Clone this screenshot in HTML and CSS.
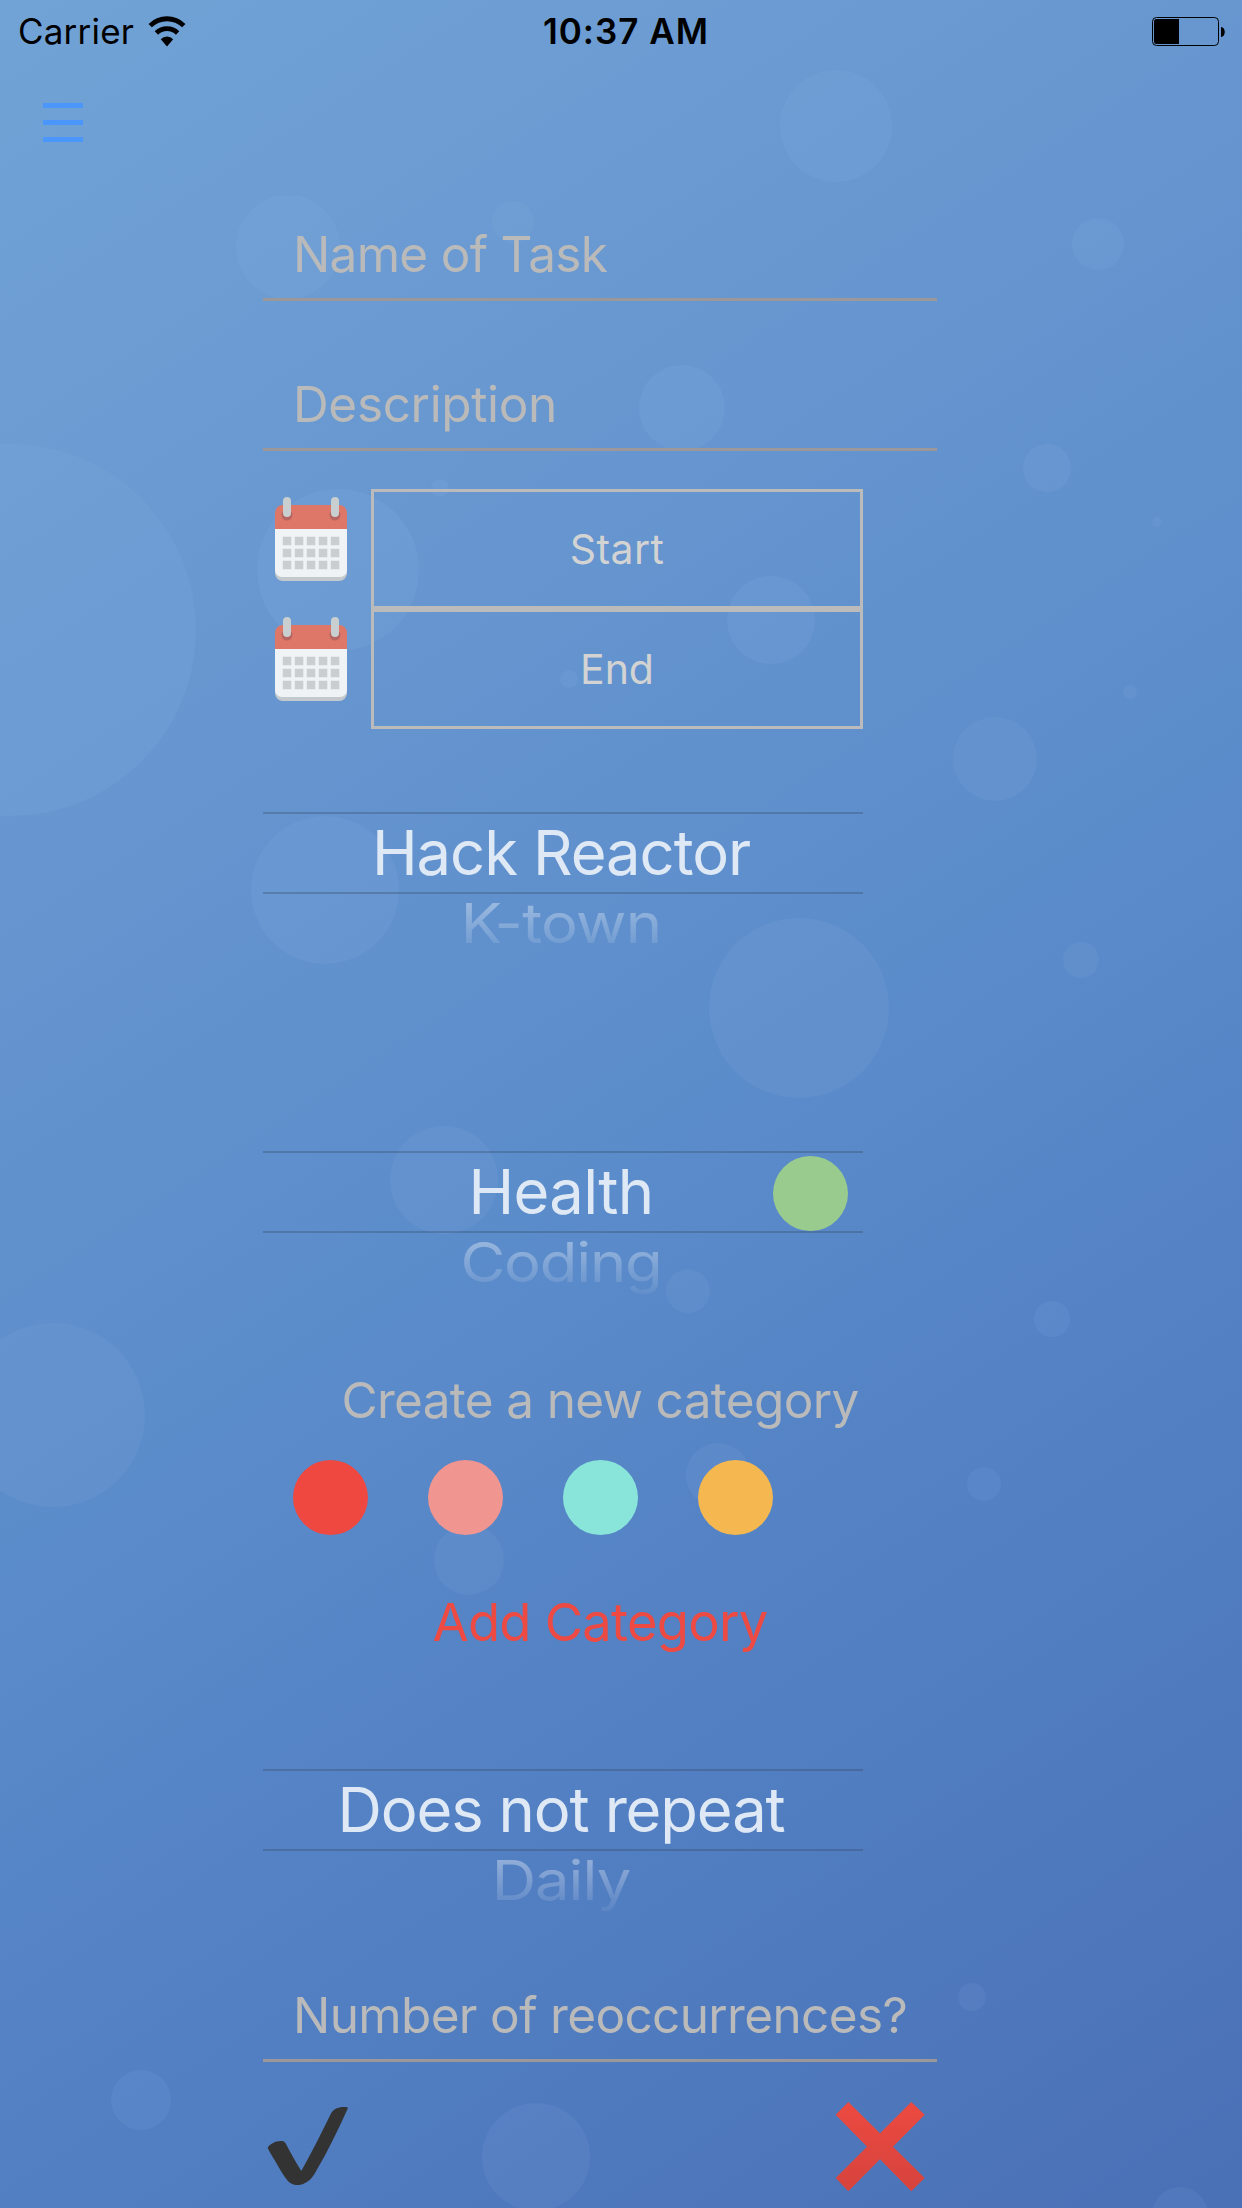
FILE: index.html
```html
<!DOCTYPE html>
<html lang="en">
<head>
<meta charset="utf-8">
<title>New task</title>
<link rel="stylesheet" href="styles.css">
</head>
<body>
<div class="screen">
  <svg class="bubbles" viewBox="0 0 1242 2208" aria-hidden="true">
    <circle cx="836" cy="126" r="56"/><circle cx="288" cy="247" r="52"/><circle cx="513" cy="222" r="21"/>
    <circle cx="1098" cy="244" r="26"/><circle cx="682" cy="408" r="43"/><circle cx="10" cy="630" r="186"/>
    <circle cx="338" cy="570" r="81"/><circle cx="440" cy="488" r="9"/><circle cx="771" cy="620" r="44"/>
    <circle cx="569" cy="679" r="9"/><circle cx="1047" cy="468" r="24"/><circle cx="1157" cy="522" r="5"/>
    <circle cx="1130" cy="692" r="7"/><circle cx="995" cy="759" r="42"/><circle cx="325" cy="890" r="74"/>
    <circle cx="799" cy="1008" r="90"/><circle cx="1081" cy="960" r="18"/><circle cx="444" cy="1180" r="54"/>
    <circle cx="688" cy="1291" r="22"/><circle cx="1052" cy="1319" r="18"/><circle cx="53" cy="1415" r="92"/>
    <circle cx="718" cy="1475" r="32"/><circle cx="984" cy="1484" r="17"/><circle cx="469" cy="1560" r="35"/>
    <circle cx="972" cy="1997" r="14"/><circle cx="141" cy="2100" r="30"/><circle cx="536" cy="2157" r="54"/>
    <circle cx="1180" cy="2215" r="28"/>
  </svg>

  <header class="status">
    <div class="status-left">
      <span class="carrier">Carrier</span>
      <svg class="wifi" width="38" height="32" viewBox="0 0 38 32">
        <path d="M2.200 10.600a24 24 0 0 1 33.600 0M8.400 18a15 15 0 0 1 21.200 0" fill="none" stroke="#000" stroke-width="4.800"/>
        <path d="M19 31.500l-6.200-7.200a8.500 8.500 0 0 1 12.400 0z"/>
      </svg>
    </div>
    <span class="clock">10:37 AM</span>
    <svg class="battery" width="74" height="30" viewBox="0 0 74 30">
      <rect x=".5" y=".5" width="66" height="28" rx="4" fill="none" stroke="#000"/>
      <path d="M4.500 2H27v25H4.500a2.500 2.500 0 0 1-2.500-2.500v-20A2.500 2.500 0 0 1 4.500 2zM69 10c5 0 5 10 0 10z"/>
    </svg>
  </header>

  <button class="menu" aria-label="Menu"><i></i><i></i><i></i></button>

  <main class="form">
    <div class="field"><span class="t-name">Name of Task</span></div>
    <div class="field"><span class="t-desc">Description</span></div>

    <section class="dates">
      <div class="date">
        <svg class="cal" width="74" height="88" viewBox="0 0 74 88">
          <defs>
            <g id="calendar">
              <rect x="1" y="20" width="72" height="65" rx="8" fill="#c3c9cc"/>
              <path d="M1 30h72v44a7 7 0 0 1-7 7H8a7 7 0 0 1-7-7z" fill="#eff3f5"/>
              <path d="M1 33V17a8 8 0 0 1 8-8h56a8 8 0 0 1 8 8v16z" fill="#de7768"/>
              <circle cx="13" cy="19" r="5.500" fill="#b8655f"/><circle cx="61" cy="19" r="5.500" fill="#b8655f"/>
              <rect x="9" y="1" width="8" height="20" rx="4" fill="#c9ced1"/><rect x="57" y="1" width="8" height="20" rx="4" fill="#c9ced1"/>
              <path d="M8.800 45h60M8.800 57h60M8.800 69h60" stroke="#cbced1" stroke-width="8.500" stroke-dasharray="8.500 3.500"/>
            </g>
          </defs>
          <use href="#calendar"/>
        </svg>
        <div class="date-box"><span class="t-start">Start</span></div>
      </div>
      <div class="date">
        <svg class="cal" width="74" height="88" viewBox="0 0 74 88"><use href="#calendar"/></svg>
        <div class="date-box"><span class="t-end">End</span></div>
      </div>
    </section>

    <section class="picker picker-place">
      <div class="selected"><span class="t-hack">Hack Reactor</span></div>
      <div class="next"><span class="t-ktown">K-town</span></div>
    </section>

    <section class="picker picker-category">
      <div class="selected"><span class="t-health">Health</span><i class="dot dot-green"></i></div>
      <div class="next"><span class="t-coding">Coding</span></div>
    </section>

    <div class="new-category"><span class="t-create">Create a new category</span></div>
    <div class="swatches">
      <i class="dot dot-red"></i><i class="dot dot-pink"></i><i class="dot dot-mint"></i><i class="dot dot-amber"></i>
    </div>
    <div class="add"><span class="t-add">Add Category</span></div>

    <section class="picker picker-repeat">
      <div class="selected"><span class="t-repeat">Does not repeat</span></div>
      <div class="next"><span class="t-daily">Daily</span></div>
    </section>

    <div class="field field-count"><span class="t-number">Number of reoccurrences?</span></div>

    <footer class="actions">
      <svg width="84" height="90" viewBox="0 0 84 90" role="img" aria-label="Save">
        <path d="M2.700 46.700C5 42.500 11.500 39.500 17 40c2 .2 2.700 1 3.700 2.500 5 9.500 10 18.500 15.600 27.500C47 51 57 31 66 12.500 68.500 7.500 74 5.500 81 6c2 .2 2 1 1.300 2.500C73 29 63 50 51.700 69c-1.700 3-3 5.500-5 7.700-4 4.800-9.700 7.600-15 7.300-3.700-.2-6.700-1.500-9-4.300C18 74 14 66.500 10 59.700 7 55 4.500 51 2.700 46.700z" fill="#333"/>
      </svg>
      <svg width="90" height="92" viewBox="0 0 90 92" role="img" aria-label="Cancel">
        <defs><linearGradient id="cross" x2="0" y2="1"><stop stop-color="#ec4a40"/><stop offset="1" stop-color="#d6433d"/></linearGradient></defs>
        <path d="M13.300 1L45 32.300 76.300 1l13.400 12.700L58 45.700 89.700 77 76.300 90.300 45 58.300l-31.700 32L.7 77 32 45.700.7 13.700z" fill="url(#cross)"/>
      </svg>
    </footer>
  </main>
</div>
</body>
</html>
```
FILE: styles.css
```css
* { box-sizing: border-box; }
body { margin: 0; font-family: Inter, "Liberation Sans", sans-serif; }
.screen {
  position: relative;
  width: 1242px;
  height: 2208px;
  overflow: hidden;
  background: linear-gradient(147deg, #71a3d6 0%, #6897d0 26%, #5c8dcb 50%, #5381c4 70%, #4a70b6 100%);
}
.bubbles { position: absolute; inset: 0; width: 1242px; height: 2208px; fill: rgba(165, 200, 240, .085); }
.status, .menu, .form { position: relative; }
span { display: block; white-space: nowrap; }

.status {
  display: grid;
  grid-template-columns: 1fr auto 1fr;
  height: 60px;
  padding: 0 16px 0 18px;
  align-items: center;
}
.status-left { display: flex; align-items: center; gap: 14px; }
.carrier { font-size: 35px; letter-spacing: .2px; line-height: 62px; }
.wifi { margin-top: 0; }
.clock { padding-left: 8px; font-size: 35px; font-weight: 600; letter-spacing: 1px; line-height: 62px; }
.battery { justify-self: end; margin-top: 1px; }

.menu {
  display: flex;
  flex-direction: column;
  gap: 12px;
  width: 40px;
  margin: 43px 0 0 43px;
  padding: 0;
  border: 0;
  background: none;
}
.menu i { width: 40px; height: 5px; background: #4a96fa; }

.form { width: 674px; margin: 9px 0 0 263px; }
.field {
  height: 150px;
  padding: 73px 0 0 30px;
  border-bottom: 3px solid #9c9798;
  color: #bababa;
  font-size: 49.500px;
  line-height: 60px;
}
.t-name { letter-spacing: -.7px; }
.t-desc { letter-spacing: -.35px; }
.t-number { letter-spacing: -.65px; }

.dates { width: 600px; margin-top: 38px; }
.date { display: flex; height: 120px; padding-left: 11px; gap: 23px; }
.cal { margin-top: 7px; }
.date-box {
  display: flex;
  flex: 1;
  justify-content: center;
  border: 3px solid #bbb;
  color: #d3d3d3;
  font-size: 41px;
  line-height: 114px;
}
.t-start { letter-spacing: .4px; }

.picker { width: 600px; }
.picker-place { height: 339px; margin-top: 83px; }
.picker-category { height: 200px; }
.picker-repeat { height: 190px; }
.selected {
  position: relative;
  display: flex;
  justify-content: center;
  height: 82px;
  padding-right: 4px;
  border: solid rgba(50, 65, 90, .3);
  border-width: 2px 0;
  color: #dfe9f5;
  font-size: 61.500px;
  line-height: 78px;
}
.t-hack { letter-spacing: -1.050px; }
.t-health { letter-spacing: -.7px; }
.t-repeat { letter-spacing: -1.150px; }
.next {
  display: flex;
  justify-content: center;
  height: 70px;
  padding-right: 4px;
  color: #fff;
  font-size: 61.500px;
  line-height: 64px;
  transform: scaleY(.9);
  transform-origin: top;
  -webkit-mask-image: linear-gradient(rgba(0, 0, 0, .42), rgba(0, 0, 0, .04));
  mask-image: linear-gradient(rgba(0, 0, 0, .42), rgba(0, 0, 0, .04));
}
.t-ktown { letter-spacing: -.7px; }
.t-coding { letter-spacing: -1.200px; }
.t-daily { letter-spacing: -1px; }
.dot { width: 75px; height: 75px; border-radius: 50%; }
.dot-green { position: absolute; top: 3px; right: 15px; background: #9acb8e; }
.dot-red { background: #ee4841; }
.dot-pink { background: #f19591; }
.dot-mint { background: #89e5da; }
.dot-amber { background: #f5b750; }

.new-category {
  display: flex;
  justify-content: center;
  height: 109px;
  padding-top: 19px;
  color: #bababa;
  font-size: 49.500px;
  line-height: 60px;
}
.t-create { letter-spacing: -.68px; }
.swatches { display: flex; gap: 60px; padding-left: 30px; }
.add {
  display: flex;
  justify-content: center;
  height: 234px;
  padding-top: 57px;
  color: #ec4a43;
  font-size: 52.500px;
  line-height: 60px;
}
.t-add { letter-spacing: -.75px; }
.field-count { height: 103px; padding-top: 26px; }
.actions { display: flex; justify-content: space-between; align-items: flex-start; margin-top: 39px; padding: 0 12px 0 2px; }
```
